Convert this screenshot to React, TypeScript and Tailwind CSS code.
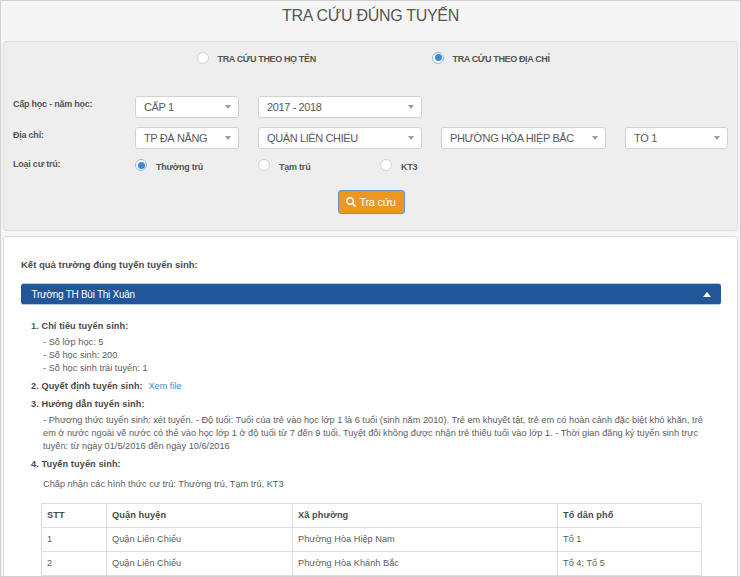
import { FaSearch } from "react-icons/fa";

function Radio({ checked = false }: { checked?: boolean }) {
  return (
    <span
      className={
        checked
          ? "flex size-3 shrink-0 items-center justify-center rounded-full border border-[#8fbbe3] bg-white"
          : "flex size-3 shrink-0 items-center justify-center rounded-full border border-[#d0d0d0] bg-white"
      }
    >
      {checked && <span className="size-[7px] shrink-0 rounded-full bg-[#428bca]" />}
    </span>
  );
}

function Select({ value, className }: { value: string; className: string }) {
  return (
    <div
      className={`flex h-[22px] shrink-0 items-center justify-between rounded-[3px] border border-[#d2d2d2] bg-white pr-[7px] pl-2 text-[11px] tracking-[-0.38px] text-[#5a5a5a] ${className}`}
    >
      <span className="whitespace-nowrap">{value}</span>
      <span className="border-x-[3.5px] border-t-[4px] border-x-transparent border-t-[#9a9a9f]" />
    </div>
  );
}

const wards = [
  ["1", "Quận Liên Chiểu", "Phường Hòa Hiệp Nam", "Tổ 1"],
  ["2", "Quận Liên Chiểu", "Phường Hòa Khánh Bắc", "Tổ 4; Tổ 5"],
];

export default function App() {
  return (
    <div className="h-[577px] w-[741px] overflow-hidden border border-[#d0d0d0] bg-[#f5f5f5] px-[2px] font-['Liberation_Sans',Arial,sans-serif] text-[9.2px] tracking-[0.017px] text-[#5c5c5c]">
      <h1 className="h-10 pt-[5px] text-center text-[16px] leading-5 tracking-[-0.3px] text-[#555]">TRA CỨU ĐÚNG TUYẾN</h1>

      <section className="h-[190px] rounded-[3px] border border-[#e0e0e0] bg-[#eee] text-[9px] tracking-[-0.23px] text-[#555]">
        <div className="flex h-[31px] items-center pl-[193px] font-bold tracking-[-0.36px]">
          <Radio />
          <span className="w-[223px] pt-[4px] pl-[8.5px] whitespace-nowrap">TRA CỨU THEO HỌ TÊN</span>
          <Radio checked />
          <span className="pt-[4px] pl-[8.5px] whitespace-nowrap">TRA CỨU THEO ĐỊA CHỈ</span>
        </div>
        <div className="mt-[23px] flex h-[22px]">
          <span className="w-[131px] shrink-0 pt-[1px] pl-[9px] leading-[14px] font-bold">Cấp học - năm học:</span>
          <div className="flex gap-[19px]">
            <Select value="CẤP 1" className="w-[104px]" />
            <Select value="2017 - 2018" className="w-[164px]" />
          </div>
        </div>
        <div className="mt-[9px] flex h-[22px]">
          <span className="w-[131px] shrink-0 pt-[1px] pl-[9px] leading-[14px] font-bold">Địa chỉ:</span>
          <div className="flex gap-[19px]">
            <Select value="TP ĐÀ NẴNG" className="w-[104px]" />
            <Select value="QUẬN LIÊN CHIỂU" className="w-[164px]" />
            <Select value="PHƯỜNG HÒA HIỆP BẮC" className="w-[165px]" />
            <Select value="TỔ 1" className="w-[103px]" />
          </div>
        </div>
        <div className="mt-[8px] flex h-4 font-bold">
          <span className="w-[131px] shrink-0 pl-[9px] leading-[14px]">Loại cư trú:</span>
          <span className="flex w-[123px] gap-[9px] pt-[2px]">
            <Radio checked />
            <span className="pt-px leading-[14px]">Thường trú</span>
          </span>
          <span className="flex w-[122px] gap-[9px] pt-[2px]">
            <Radio />
            <span className="pt-px leading-[14px]">Tạm trú</span>
          </span>
          <span className="flex gap-[9px] pt-[2px]">
            <Radio />
            <span className="pt-px leading-[14px]">KT3</span>
          </span>
        </div>
        <button className="mt-[17px] ml-[334px] flex h-6 w-[67px] items-center justify-center gap-[3px] rounded-[3px] border border-[#6d93c4] bg-[#ec971f] pr-px text-[11px] tracking-[-0.3px] text-white">
          <FaSearch className="size-[10px]" />
          <span className="whitespace-nowrap">Tra cứu</span>
        </button>
      </section>

      <section className="mt-[5px] h-[360px] rounded-t-[3px] border border-[#dcdcdc] bg-white pt-[21px] pr-4 pl-[17px]">
        <h2 className="text-[9.5px] leading-[14px] font-bold tracking-normal text-[#4a4a4a]">Kết quả trường đúng tuyến tuyển sinh:</h2>
        <div className="mt-[11px] flex h-[22px] items-center justify-between rounded-[3px] border-y border-[#b4c8e0] bg-[#225699] pr-[10px] pl-[10.5px] text-[10px] tracking-[-0.27px] text-white">
          <span>Trường TH Bùi Thị Xuân</span>
          <span className="border-x-[4px] border-b-[5px] border-x-transparent border-b-white" />
        </div>

        <div className="pt-[15px] pl-[10px] leading-[13px]">
          <h3 className="font-bold tracking-[0.08px] text-[#4a4a4a]"><span className="text-[#51616f]">1.</span> Chỉ tiêu tuyển sinh:</h3>
          <div className="mt-[3px] pl-3">
            <p>- Số lớp học: 5</p>
            <p>- Số học sinh: 200</p>
            <p>- Số học sinh trái tuyển: 1</p>
          </div>
          <h3 className="mt-[5px] font-bold tracking-[0.08px] text-[#4a4a4a]">
            2. Quyết định tuyển sinh: <a className="pl-[3px] font-normal tracking-normal text-[#428bca]">Xem file</a>
          </h3>
          <h3 className="mt-[5px] font-bold tracking-[0.08px] text-[#4a4a4a]">3. Hướng dẫn tuyển sinh:</h3>
          <div className="mt-[3px] pl-3 whitespace-nowrap">
            <p>- Phương thức tuyển sinh: xét tuyển. - Độ tuổi: Tuổi của trẻ vào học lớp 1 là 6 tuổi (sinh năm 2010). Trẻ em khuyết tật, trẻ em có hoàn cảnh đặc biệt khó khăn, trẻ</p>
            <p>em ở nước ngoài về nước có thể vào học lớp 1 ở độ tuổi từ 7 đến 9 tuổi. Tuyệt đối không được nhận trẻ thiếu tuổi vào lớp 1. - Thời gian đăng ký tuyển sinh trực</p>
            <p>tuyến: từ ngày 01/5/2016 đến ngày 10/6/2016</p>
          </div>
          <h3 className="mt-[5px] font-bold tracking-[0.08px] text-[#4a4a4a]">4. Tuyến tuyển sinh:</h3>
          <p className="mt-[7px] pl-3">Chấp nhận các hình thức cư trú: Thường trú, Tạm trú, KT3</p>
        </div>

        <table className="mt-[12px] ml-[20px] w-[661px] table-fixed border-collapse">
          <thead>
            <tr className="h-6 text-left tracking-[0.1px] text-[#4a4a4a]">
              <th className="w-[65px] border border-[#ddd] pl-[5px]">STT</th>
              <th className="w-[186px] border border-[#ddd] pl-[5px]">Quận huyện</th>
              <th className="w-[265px] border border-[#ddd] pl-[5px]">Xã phường</th>
              <th className="border border-[#ddd] pl-[5px]">Tổ dân phố</th>
            </tr>
          </thead>
          <tbody>
            {wards.map((row) => (
              <tr key={row[0]} className="h-6">
                {row.map((cell, i) => (
                  <td key={i} className="border border-[#ddd] pl-[5px]">{cell}</td>
                ))}
              </tr>
            ))}
          </tbody>
        </table>
      </section>
    </div>
  );
}
